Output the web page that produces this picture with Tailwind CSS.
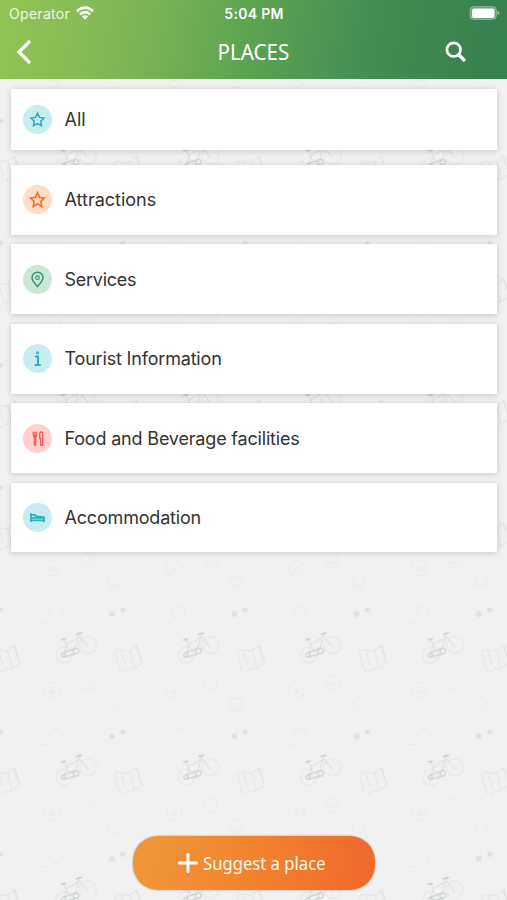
<!DOCTYPE html>
<html lang="en">
<head>
<meta charset="utf-8">
<title>Places</title>
<script src="https://cdn.jsdelivr.net/npm/@tailwindcss/browser@4"></script>
</head>
<body class="font-['Inter',sans-serif]">
<div class="relative isolate flex h-[900px] w-[507px] flex-col overflow-hidden bg-[#f1f1f1]">
  <!-- cycling wallpaper -->
  <svg class="absolute inset-0 -z-10" width="507" height="900" fill="none">
    <defs>
      <pattern id="bg" width="122.3" height="122.25" patternUnits="userSpaceOnUse" x="0" y="550">
        <g stroke="#e9eaea" stroke-width="1">
          <circle cx="52" cy="18" r="8"/><path d="M48 20h8M52 15v6"/>
          <circle cx="88" cy="11" r="7"/><path d="M84 12q4 4 8-3"/>
          <circle cx="114" cy="32" r="6.5"/><path d="M111 35h6"/>
          <circle cx="56" cy="63" r="6.5"/><path d="M41 72h9"/>
        </g>
        <g stroke="#e3e5e5" stroke-width="1">
          <circle cx="64" cy="105" r="8"/>
          <circle cx="88" cy="95" r="8.500"/>
          <path d="M-7 103q0-4 5-3l9 1 8-6 5 18-7 5-8 1-7 6zM-1 101l4 14M8 101l4 17M14 96l5 15M115 103q0-4 5-3l8 1M115 103l3 12 4 10M121 101l4 14"/>
        </g>
        <g stroke="#dcdede" stroke-width="1">
          <path d="M64 90l4 9M67 94l12-7M79 85l-4 15M79 86l9 11M67 94l-3 10"/>
        </g>
        <path d="M61 90l5-1.200M76 84.500l6-1.800" stroke="#c6caca" stroke-width="1.400"/>
        <g stroke="#cbd3cd" stroke-width="1.200">
          <circle cx="76" cy="101" r="2.800"/><circle cx="63.500" cy="105" r="2"/><path d="M63 103l12-4.500M64 107l12-3.200"/>
        </g>
        <g fill="#e2e4e4"><circle cx="112" cy="64" r="3"/><circle cx="1" cy="60" r="2.400"/></g>
        <circle cx="123" cy="60" r="2.400" fill="#dadcdc"/>
      </pattern>
    </defs>
    <rect width="507" height="900" fill="url(#bg)"/>
  </svg>

  <header class="h-[79px] shrink-0 bg-[linear-gradient(100deg,#8fc355_3%,#82b956_22%,#5ba350_50%,#438c54_74%,#37804f_98%)] text-white">
    <div class="grid h-7 grid-cols-3 items-center pr-2 pl-[9px]">
      <div class="flex items-center gap-[6px] text-[14px] tracking-[0.3px] text-white/85"><span class="-mt-px">Operator</span>
        <svg class="mb-0.5" width="18" height="14" viewBox="0 0 18 14" fill="#fff"><path d="M0 4.200Q9-3.800 18 4.200L16.200 6.200Q9 0 1.800 6.200zM3 7.400Q9 2.200 15 7.400L13.200 9.300Q9 5.700 4.800 9.300zM6 10.500Q9 8 12 10.500L9 13.700z"/></svg>
      </div>
      <div class="-mt-0.5 text-center text-[14px] font-semibold tracking-[0.3px]">5:04 PM</div>
      <svg class="-mt-0.5 -mr-[2px] justify-self-end" width="32" height="16" viewBox="0 0 32 16"><rect x="1" y="1.500" width="26.500" height="13" rx="4" fill="#fff" fill-opacity=".25" stroke="#fff" stroke-opacity=".3"/><rect x="3" y="3.500" width="22.500" height="9.500" rx="2" fill="#fff"/><path d="M28.500 6v4q2-.5 2-2t-2-2z" fill="#fff" fill-opacity=".5"/></svg>
    </div>
    <div class="grid h-12 grid-cols-3 items-center">
      <svg class="ml-4" width="16" height="26" viewBox="0 0 16 26" fill="none" stroke="#fff" stroke-width="3.200"><path d="M14 2L3 13l11 11"/></svg>
      <h1 class="-mt-0.5 flex justify-center font-['Noto_Sans',sans-serif] text-[22px]"><span class="inline-block scale-x-[0.935]">PLACES</span></h1>
      <svg class="mr-[40px] justify-self-end" width="22" height="22" viewBox="0 0 22 22" fill="none" stroke="#fff" stroke-width="2.700"><circle cx="8.700" cy="8.700" r="6.800"/><path d="M13.500 13.500l6.500 6.500" stroke-width="3.200"/></svg>
    </div>
  </header>

  <main class="flex flex-col gap-[9.5px] px-[10.5px] pt-[10px] text-[18px] tracking-[-0.18px] text-[#333]">
    <section class="mb-[5px] flex h-[61px] items-center gap-[13px] rounded-[1px] bg-white pl-3 shadow-[0_1px_6px_rgba(0,0,0,0.18)]">
      <svg width="29" height="29" viewBox="0 0 29 29" fill="none"><circle cx="14.500" cy="14.500" r="14.500" fill="#c8edf1"/><path d="M14.500 8.300l2 4.100 4.500.7-3.200 3.100.7 4.500-4-2.100-4 2.100.7-4.500L8 13.100l4.500-.7z" stroke="#25adc1" stroke-width="1.500"/></svg>
      <span class="tracking-normal">All</span>
    </section>
    <section class="flex h-[70px] items-center gap-[13px] rounded-[1px] bg-white pl-3 shadow-[0_1px_6px_rgba(0,0,0,0.18)]">
      <svg width="29" height="29" viewBox="0 0 29 29" fill="none"><circle cx="14.500" cy="14.500" r="14.500" fill="#ffdcc6"/><path d="M14.500 7.800l2.100 4.600 4.800.6-3.500 3.400.9 5-4.300-2.400-4.300 2.400.9-5L7.600 13l4.800-.6z" stroke="#f36f21" stroke-width="1.600"/></svg>
      <span class="tracking-normal">Attractions</span>
    </section>
    <section class="flex h-[70px] items-center gap-[13px] rounded-[1px] bg-white pl-3 shadow-[0_1px_6px_rgba(0,0,0,0.18)]">
      <svg width="29" height="29" viewBox="0 0 29 29" fill="none"><circle cx="14.500" cy="14.500" r="14.500" fill="#cae7d8"/><path d="M14.500 21.600Q9 15.400 9 12.700a5.500 5.500 0 0 1 11 0q0 2.700-5.500 8.900z" stroke="#36956a" stroke-width="1.500"/><circle cx="14.500" cy="12.700" r="1.800" stroke="#36956a" stroke-width="1.200"/></svg>
      <span class="tracking-[-0.27px]">Services</span>
    </section>
    <section class="flex h-[70px] items-center gap-[13px] rounded-[1px] bg-white pl-3 shadow-[0_1px_6px_rgba(0,0,0,0.18)]">
      <svg width="29" height="29" viewBox="0 0 29 29" fill="none"><circle cx="14.500" cy="14.500" r="14.500" fill="#c8edf1"/><circle cx="14.500" cy="8.700" r="1.500" fill="#2bb0c4"/><path d="M12 12.500h3v8.500M11.700 21h6.100" stroke="#2bb0c4" stroke-width="2"/></svg>
      <span>Tourist Information</span>
    </section>
    <section class="flex h-[70px] items-center gap-[13px] rounded-[1px] bg-white pl-3 shadow-[0_1px_6px_rgba(0,0,0,0.18)]">
      <svg width="29" height="29" viewBox="0 0 29 29" fill="none"><circle cx="14.500" cy="14.500" r="14.500" fill="#ffd0cd"/><path d="M9.400 7.700h5.200l-.4 4.600-.9 1.500v7.900h-2.600v-7.900l-.9-1.500z" fill="#f35e55"/><path d="M11.200 8v3M12.900 8v3" stroke="#ffb1ac" stroke-width=".6"/><path d="M16.700 14.500V9.500q0-1.500 1.500-1.500t1.500 1.500v11.700h-2v-6.700z" stroke="#f35e55" stroke-width="1.400"/></svg>
      <span>Food and Beverage facilities</span>
    </section>
    <section class="flex h-[69.5px] items-center gap-[13px] rounded-[1px] bg-white pl-3 shadow-[0_1px_6px_rgba(0,0,0,0.18)]">
      <svg width="29" height="29" viewBox="0 0 29 29" fill="none"><circle cx="14.500" cy="14.500" r="14.500" fill="#c8edf1"/><path d="M7.900 10v9M7.700 17.300h13.800M21 19.200v-5L12.500 13M8 14.800h13M8.500 11.800h3.500l1 2.500" stroke="#2bb0c4" stroke-width="1.700"/></svg>
      <span>Accommodation</span>
    </section>
  </main>

  <footer class="mt-auto mb-[10px] flex justify-center">
    <button class="ml-px flex h-[54px] w-[242px] items-center justify-center gap-[5px] rounded-[25px] bg-[linear-gradient(100deg,#f09438_10%,#f2832f_50%,#ef6b2b_92%)] pr-[3px] font-['Noto_Sans',sans-serif] text-[18px] text-[#fff5e8] shadow-[0_0_2px_rgba(70,60,50,0.55)]">
      <svg class="-ml-[3px]" width="20" height="20" viewBox="0 0 20 20" stroke="#fff" stroke-width="3" stroke-linecap="round"><path d="M10 1.500v17M1.500 10h17"/></svg>
      <span class="inline-block w-[122px] origin-left scale-x-[0.925] whitespace-nowrap text-left">Suggest a place</span>
    </button>
  </footer>
</div>
</body>
</html>
